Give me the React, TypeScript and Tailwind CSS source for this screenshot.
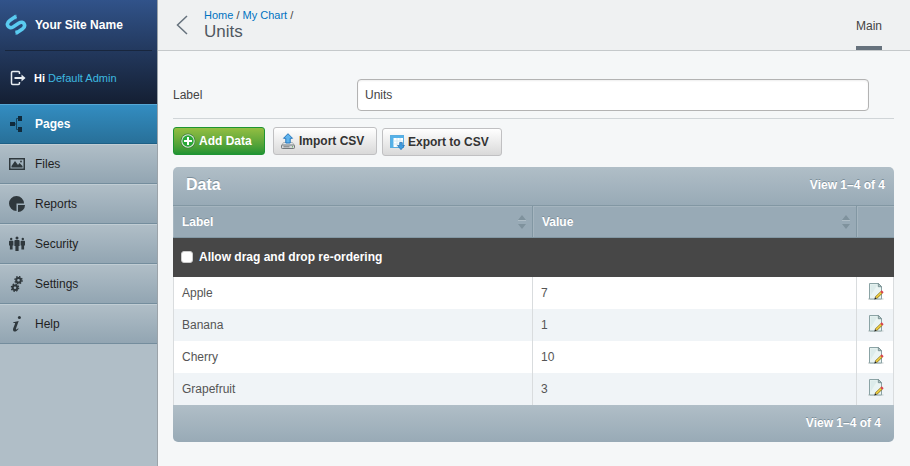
import React from "react";

const rows = [
  { label: "Apple", value: "7" },
  { label: "Banana", value: "1" },
  { label: "Cherry", value: "10" },
  { label: "Grapefruit", value: "3" },
];

function PagesIcon() {
  return (
    <svg width="16" height="16" viewBox="0 0 16 16" fill="#102a3c" aria-hidden="true">
      <path d="M1 6h5v4H1zM9 0h4v5H9zM9 11h4v5H9z" />
      <path d="M6 8h2M9 2.500H7.500v11H9" fill="none" stroke="#17455f" />
    </svg>
  );
}

function FilesIcon() {
  return (
    <svg width="16" height="16" viewBox="0 0 16 16" fill="#2f383d" aria-hidden="true">
      <path fillRule="evenodd" d="M0 2h16v12H0zM1.500 3.500v9h13v-9z" />
      <path d="M2.500 11.500V10L6 5l3 4 1.500-2 3 3v1.500z" />
      <circle cx="12" cy="5.500" r="0.900" />
    </svg>
  );
}

function ReportsIcon() {
  return (
    <svg width="16" height="16" viewBox="0 0 16 16" fill="#2f383d" aria-hidden="true">
      <path d="M7.500 0A7.500 7.500 0 0 1 15 7.500H7.500V15A7.500 7.500 0 0 1 7.500 0z" />
      <path d="M9 9h7a7 7 0 0 1-7 7z" />
    </svg>
  );
}

function SecurityIcon() {
  return (
    <svg width="16" height="16" viewBox="0 0 16 16" fill="#2f383d" aria-hidden="true">
      <circle cx="2.200" cy="3" r="1.200" />
      <path d="M.8 4.700h2.800q.8 0 .8.800V9.500h-.8V13.500H.9V9.500H0v-4q0-.8.8-.8z" />
      <circle cx="8" cy="2" r="1.500" />
      <path d="M6.400 4h3.200q1 0 1 1v5h-1v5H6.400v-5h-1V5q0-1 1-1z" />
      <circle cx="13.800" cy="3" r="1.200" />
      <path d="M12.400 4.700h2.800q.8 0 .8.800v4h-.9v4h-2.700v-4h-.8v-4q0-.8.8-.8z" />
    </svg>
  );
}

function SettingsIcon() {
  return (
    <svg width="16" height="16" viewBox="0 0 16 16" fill="none" stroke="#2f383d" aria-hidden="true">
      <circle cx="9.500" cy="4.200" r="2.300" strokeWidth="2" />
      <circle cx="9.500" cy="4.200" r="3.600" strokeWidth="1.400" strokeDasharray="1.500 1.330" />
      <circle cx="6" cy="11.700" r="2.300" strokeWidth="2" />
      <circle cx="6" cy="11.700" r="3.600" strokeWidth="1.400" strokeDasharray="1.500 1.330" />
    </svg>
  );
}

function HelpIcon() {
  return (
    <svg width="16" height="16" viewBox="0 0 16 16" aria-hidden="true">
      <circle cx="10.400" cy="1.500" r="1.500" fill="#2f383d" />
      <path
        d="M4.300 6.200l5.400-1.300-2.700 7.600c-.4 1.400.5 1.300 2.200-.2l.3.600C7.500 15.700 4.200 16.700 4 13.800c-.1-1.500 1.600-4.400 2.100-6.300.2-.7-.8-.6-1.800-.4z"
        fill="#2f383d"
      />
    </svg>
  );
}

const menu = [
  { name: "Files", Icon: FilesIcon },
  { name: "Reports", Icon: ReportsIcon },
  { name: "Security", Icon: SecurityIcon },
  { name: "Settings", Icon: SettingsIcon },
  { name: "Help", Icon: HelpIcon },
];

function Logo() {
  return (
    <svg width="22" height="22" viewBox="0 0 22 22" fill="none" stroke="#5acbf0" strokeWidth="3.600" aria-hidden="true">
      <path d="M11 2.200L4.800 6.400C0 9.800 3.400 15.600 8 13L14 9C18.600 6.200 21.800 11.800 17.400 15L11 19.300" />
      <path d="M10.900.7v4.600M11.100 16.200v4.600" strokeWidth="1" />
    </svg>
  );
}

function LogoutIcon() {
  return (
    <svg width="16" height="16" viewBox="0 0 16 16" fill="none" stroke="#e8edf2" strokeWidth="1.500" aria-hidden="true">
      <path d="M9.500 4V2.700Q9.500 1.500 8.300 1.500H2.700Q1.500 1.500 1.500 2.700v10.600q0 1.200 1.200 1.200h5.600q1.200 0 1.200-1.200V12" />
      <path d="M4.500 8H14" strokeWidth="2" />
      <path d="M11.500 4.500L15.500 8l-4 3.500z" fill="#e8edf2" stroke="none" />
    </svg>
  );
}

function AddIcon() {
  return (
    <svg width="16" height="16" viewBox="0 0 16 16" aria-hidden="true">
      <circle cx="8" cy="8" r="7.500" fill="#3f7a3c" />
      <circle cx="8" cy="8" r="6.700" fill="#dcecd8" />
      <circle cx="8" cy="8" r="5.700" fill="#27a836" />
      <path d="M8 4v8M4 8h8" stroke="#fff" strokeWidth="2" />
    </svg>
  );
}

function ImportIcon() {
  return (
    <svg width="16" height="16" viewBox="0 0 16 16" aria-hidden="true">
      <path d="M3.500 9.500h9l2 3h-13z" fill="#e4e7e8" stroke="#a3a8aa" strokeWidth="0.800" />
      <rect x="1.500" y="12" width="13" height="3.500" rx="0.800" fill="#d5d8da" stroke="#73797c" />
      <path d="M3.500 13.800h6" stroke="#73797c" />
      <path d="M12 13.800h1" stroke="#4ba33c" />
      <path d="M8 .7l4.500 4.600H10.200V10H5.800V5.300H3.500z" fill="#5fb4ee" stroke="#2777bd" />
    </svg>
  );
}

function ExportIcon() {
  return (
    <svg width="16" height="16" viewBox="0 0 16 16" aria-hidden="true">
      <rect x="1.500" y="1.500" width="13" height="12" fill="#fff" stroke="#59ade0" />
      <path d="M2 2h12v2H2zM2 4h2.500v9H2z" fill="#55b1e8" />
      <path d="M4.500 7h9.500M4.500 10h9.500M8 4v9M11 4v9" stroke="#d3e9f4" />
      <path d="M10.700 8.500h2.600v3h2.200L12 15.700l-3.500-4.200h2.200z" fill="#3f9de0" stroke="#256daf" strokeWidth="0.700" />
    </svg>
  );
}

function EditIcon() {
  return (
    <svg width="16" height="17" viewBox="0 0 16 17" className="block" aria-hidden="true">
      <path d="M0 16h15.500" stroke="#c3cbcb" />
      <path d="M1.500.500h8.800l3.200 3.200V16h-12z" fill="#eaf4f3" stroke="#8ba3a5" />
      <path d="M2.500 1.500h7L2.500 13z" fill="#dcebea" />
      <path d="M10.300.500v3.200h3.200z" fill="#bfd0d0" stroke="#6f898b" strokeWidth="0.900" />
      <path d="M8 14.700l5.500-5.300" stroke="#826b16" strokeWidth="2.800" />
      <path d="M8.100 14.600l5.400-5.200" stroke="#f0cf42" strokeWidth="1.700" />
      <path d="M6.300 16.500l.7-2.500 1.800 1.800z" fill="#252019" />
      <path d="M13.200 9.700l1.500-1.400" stroke="#d9434d" strokeWidth="2.800" />
    </svg>
  );
}

function SortIcon() {
  return (
    <svg width="8" height="14" viewBox="0 0 8 14" fill="#7f929d" aria-hidden="true">
      <path d="M4 0l4 5H0zM0 9h8l-4 5z" />
      <path d="M0 5.500h8" stroke="#b0bec7" />
    </svg>
  );
}

export default function App() {
  return (
    <div className="flex min-h-screen bg-[#f5f7f8] font-['Liberation_Sans',Arial,sans-serif] text-xs text-[#444]">
      <aside className="w-[158px] shrink-0 border-r border-[#9ba3a9] bg-[#b0bec7]">
        <div className="h-[104px] bg-linear-to-b from-[#31538a] to-[#141f33]">
          <div className="mx-[5px] flex h-[51px] items-center gap-2 border-b border-[#18263d] font-bold text-white">
            <Logo />
            <a href="#site">Your Site Name</a>
          </div>
          <div className="flex h-[53px] items-center gap-2 pt-px pl-[10px] text-[11px]">
            <LogoutIcon />
            <span>
              <b className="text-white">Hi</b>{" "}
              <a href="#profile" className="text-[#3ebae0]">
                Default Admin
              </a>
            </span>
          </div>
        </div>
        <nav>
          <a
            href="#pages"
            className="flex h-10 items-center gap-[10px] border-t border-b border-t-[#56a7d5] border-b-[#1d5f86] bg-linear-to-b from-[#338dc1] to-[#287099] pl-[9px] font-bold text-white"
          >
            <PagesIcon />
            Pages
          </a>
          {menu.map(({ name, Icon }) => (
            <a
              key={name}
              href={"#" + name.toLowerCase()}
              className="flex h-10 items-center gap-[10px] border-t border-b border-t-[#c1cdd4] border-b-[#748d9d] bg-linear-to-b from-[#b0bec7] to-[#92a5b2] pl-[9px] text-[#1f1f1f]"
            >
              <Icon />
              {name}
            </a>
          ))}
        </nav>
      </aside>

      <main className="min-w-0 flex-1">
        <header className="flex h-[51px] justify-between border-b border-[#c5c9cb] bg-[#eff1f2] pr-7">
          <div className="flex">
            <button type="button" aria-label="Back" className="flex w-[46px] items-center pl-[18px]">
              <svg width="12" height="20" viewBox="0 0 12 20" fill="none" stroke="#66727d" strokeWidth="1.500">
                <path d="M11 1L1.500 10l9.500 9" />
              </svg>
            </button>
            <div className="pt-2">
              <div className="text-[11px] leading-[14px]">
                <a href="#home" className="text-[#0073c1]">
                  Home
                </a>{" "}
                /{" "}
                <a href="#chart" className="text-[#0073c1]">
                  My Chart
                </a>{" "}
                /
              </div>
              <h1 className="text-[17px] leading-5 text-[#4f5861]">Units</h1>
            </div>
          </div>
          <a href="#main" className="border-b-4 border-[#66727d] pt-[18px] leading-4">
            Main
          </a>
        </header>

        <div className="pt-7 pr-4 pl-[15px]">
          <div className="flex border-b border-[#d0d5d8] pr-[25px] pb-[7px]">
            <label htmlFor="label" className="w-[184px] shrink-0 leading-8">
              Label
            </label>
            <input
              id="label"
              defaultValue="Units"
              className="h-8 min-w-0 flex-1 rounded-[4px] border border-[#b3b3b3] bg-white px-[7px] shadow-[inset_0_1px_2px_#eee] outline-none"
            />
          </div>

          <div className="flex items-start pt-2 font-bold">
            <button
              type="button"
              className="flex h-7 items-center gap-[3px] rounded-[3px] border border-[#1f9433] bg-linear-to-b from-[#93be42] to-[#1f9433] px-[6px] text-white"
            >
              <AddIcon />
              <span className="w-[59px] whitespace-nowrap text-left">Add Data</span>
            </button>
            <button
              type="button"
              className="ml-2 flex h-7 items-center gap-[3px] rounded-[3px] border border-[#c0c0c2] bg-linear-to-b from-white to-[#d9d9d9] px-[6px] text-[#333]"
            >
              <ImportIcon />
              <span className="w-[71px] whitespace-nowrap text-left">Import CSV</span>
            </button>
            <button
              type="button"
              className="mt-px ml-[5px] flex h-7 items-center gap-[3px] rounded-[3px] border border-[#c0c0c2] bg-linear-to-b from-white to-[#d9d9d9] px-[6px] text-[#333]"
            >
              <ExportIcon />
              <span className="w-[87px] whitespace-nowrap text-left">Export to CSV</span>
            </button>
          </div>

          <section className="mt-[11px] mb-6 overflow-hidden rounded-[5px]">
            <div className="flex h-[38px] items-center justify-between bg-linear-to-b from-[#b0bec7] to-[#98aab6] pr-[9px] pb-[2px] pl-[13px] font-bold text-white text-shadow-[0_-1px_0_#7d8f9a]">
              <h2 className="text-base">Data</h2>
              <span>View 1–4 of 4</span>
            </div>
            <table className="w-full table-fixed border-separate border-spacing-0 text-left">
              <colgroup>
                <col className="w-[360px]" />
                <col />
                <col className="w-[37px]" />
              </colgroup>
              <thead className="text-white">
                <tr className="h-[33px] bg-[#98aab6]">
                  {["Label", "Value"].map((name) => (
                    <th
                      key={name}
                      className="border-y border-r border-[#8297a3] py-0 pr-[6px] pl-[9px] shadow-[inset_1px_1px_0_#a5b5bf]"
                    >
                      <button type="button" className="flex w-full items-center justify-between text-shadow-[0_-1px_0_#7d8f9a]">
                        {name}
                        <SortIcon />
                      </button>
                    </th>
                  ))}
                  <th aria-label="Actions" className="border-y border-[#8297a3] p-0 shadow-[inset_1px_1px_0_#a5b5bf]" />
                </tr>
                <tr className="h-[39px] bg-[#474747]">
                  <th colSpan={3} className="px-2 pt-0 pb-[2px]">
                    <label className="flex items-center gap-[6px]">
                      <input
                        type="checkbox"
                        className="size-3 appearance-none rounded-[3px] border border-[#ccc] bg-white"
                      />
                      Allow drag and drop re-ordering
                    </label>
                  </th>
                </tr>
              </thead>
              <tbody className="text-[#555]">
                {rows.map((row) => (
                  <tr key={row.label} className="h-8 bg-white even:bg-[#f0f4f7]">
                    <td className="border-r border-l border-r-[#d9dcde] border-l-[#d9dcde] py-0 pl-2">{row.label}</td>
                    <td className="border-r border-[#d9dcde] px-2 py-0">{row.value}</td>
                    <td className="border-r border-[#d9dcde] p-0">
                      <button type="button" aria-label={"Edit " + row.label} className="block pb-1 pl-[11px]">
                        <EditIcon />
                      </button>
                    </td>
                  </tr>
                ))}
              </tbody>
            </table>
            <div className="flex h-[37px] items-center justify-end bg-linear-to-b from-[#b0bec7] to-[#98aab6] pr-[13px] pb-px font-bold text-white text-shadow-[0_-1px_0_#7d8f9a]">
              View 1–4 of 4
            </div>
          </section>
        </div>
      </main>
    </div>
  );
}
